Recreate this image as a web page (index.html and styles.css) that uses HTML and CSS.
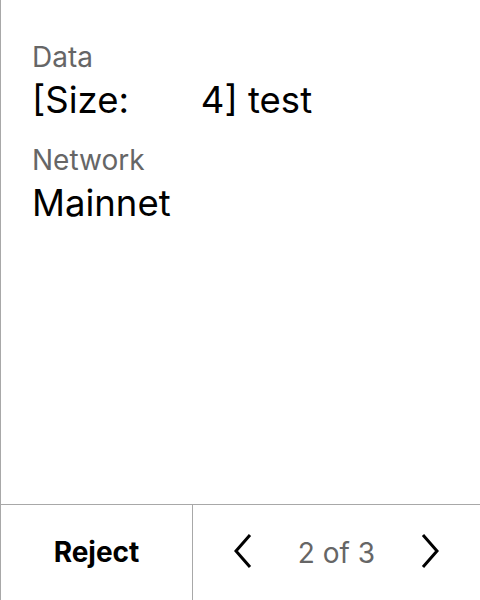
FILE: index.html
```html
<!DOCTYPE html>
<html>
<head>
<meta charset="utf-8">
<link rel="stylesheet" href="styles.css">
</head>
<body>
<div class="screen">
  <div class="content">
    <div class="field">
      <div class="label">Data</div>
      <div class="value">[Size:       4] test</div>
    </div>
    <div class="field">
      <div class="label">Network</div>
      <div class="value">Mainnet</div>
    </div>
  </div>
  <div class="footer">
    <div class="reject">Reject</div>
    <div class="pager">
      <svg class="chev" width="20" height="36" viewBox="0 0 20 36"><path d="M17 2 L3 18 L17 34" fill="none" stroke="#000" stroke-width="3"/></svg>
      <span class="count">2 of 3</span>
      <svg class="chev" width="20" height="36" viewBox="0 0 20 36"><path d="M3 2 L17 18 L3 34" fill="none" stroke="#000" stroke-width="3"/></svg>
    </div>
  </div>
</div>
</body>
</html>
```
FILE: styles.css
```css
html, body {
  margin: 0;
  padding: 0;
  background: #fff;
}
body {
  font-family: Inter, "Noto Sans", sans-serif;
  color: #000;
}
.screen {
  width: 479px;
  height: 600px;
  border-left: 1px solid #a8a8a8;
  display: flex;
  flex-direction: column;
}
.content {
  flex: 1;
  padding: 40px 32px 0 31px;
  display: flex;
  flex-direction: column;
  gap: 17px;
}
.label {
  font-size: 28px;
  line-height: 34px;
  color: #666;
}
.value {
  font-size: 36.5px;
  line-height: 52px;
  white-space: pre;
}
.footer {
  height: 95px;
  border-top: 1px solid #a8a8a8;
  display: flex;
}
.reject {
  width: 191px;
  border-right: 1px solid #a8a8a8;
  display: flex;
  align-items: center;
  justify-content: center;
  font-size: 28px;
  font-weight: 700;
  padding-bottom: 2px;
}
.pager {
  flex: 1;
  display: flex;
  align-items: center;
  justify-content: space-between;
  padding: 0 40px 0 40px;
}
.count {
  font-size: 28px;
  color: #666;
}
.chev {
  display: block;
  margin-top: -4px;
}
```
